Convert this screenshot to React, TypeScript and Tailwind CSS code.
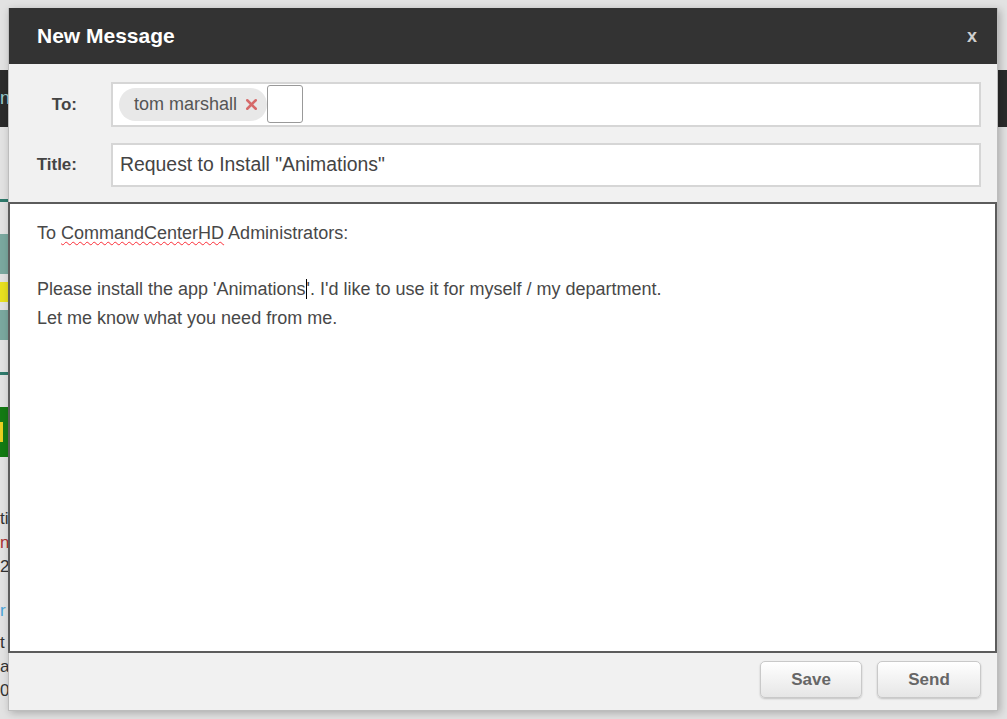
import { X } from "lucide-react";

function BackPage() {
  // the page sitting behind the dialog, only its edges show
  return (
    <div className="flex h-full w-full flex-col">
      <div className="h-[70px]" />
      <div className="flex h-[57px] items-center bg-[#2b2b2b] text-[18px] text-[#9cc]">n</div>
      <div className="h-[72px]" />
      <div className="h-[3px] w-[8px] bg-[#2f7a6c]" />
      <div className="flex h-[170px] flex-col justify-center gap-2">
        <div className="h-[40px] w-[8px] bg-[#7aa89f]" />
        <div className="h-[20px] w-[8px] bg-[#e8e020]" />
        <div className="h-[30px] w-[8px] bg-[#7aa89f]" />
      </div>
      <div className="h-[3px] w-[8px] bg-[#2f7a6c]" />
      <div className="h-[32px]" />
      <div className="flex h-[50px] w-[8px] items-center bg-[#137a13]">
        <div className="h-[20px] w-[3px] bg-[#e8d020]" />
      </div>
      <div className="flex flex-col pt-[50px] text-[17px] leading-[24px] text-[#333]">
        <span>ti</span>
        <span className="text-[#a33]">n</span>
        <span>2c</span>
        <span className="pt-[20px] text-[#4aa3d8]">r</span>
        <span className="pt-[8px]">t</span>
        <span>a</span>
        <span>0(</span>
      </div>
    </div>
  );
}

function ToField() {
  return (
    <div className="flex h-[45px] w-[870px] items-end border-2 border-[#d6d6d6] bg-white pb-[4px] pl-[6px]">
      <div className="flex h-[33px] items-center gap-[6px] rounded-full bg-[#e8e8e8] pl-[15px] pr-[7px] text-[18px] text-[#555]">
        <span>tom marshall</span>
        <X size={17} strokeWidth={3.5} className="text-[#d66a6a]" />
      </div>
      <div className="-mb-[2px] h-[38px] w-[36px] rounded-[3px] border border-[#999] bg-white" />
    </div>
  );
}

export default function App() {
  return (
    <div className="relative h-[719px] w-full overflow-hidden bg-[#e2e2e2] font-['Liberation_Sans',Arial,sans-serif]">
      <BackPage />
      <div className="absolute left-[8px] top-[8px] flex h-[703px] w-[990px] flex-col border-x border-b border-[#bdbdbd] bg-[#f1f1f1] shadow-[2px_2px_8px_rgba(0,0,0,0.25)]">
        <div className="flex h-[56px] shrink-0 items-center justify-between bg-[#333333] pl-[28px] pr-[20px]">
          <span className="text-[21px] font-bold text-white">New Message</span>
          <span className="text-[18px] font-bold text-[#cfcfcf]">x</span>
        </div>

        <div className="flex flex-col gap-[16px] pb-[15px] pr-[16px] pt-[18px]">
          <div className="flex items-center">
            <label className="w-[68px] text-right text-[17px] font-bold text-[#444]">To:</label>
            <div className="ml-[34px]">
              <ToField />
            </div>
          </div>
          <div className="flex items-center">
            <label className="w-[68px] text-right text-[17px] font-bold text-[#444]">Title:</label>
            <div className="ml-[34px] flex h-[44px] w-[870px] items-center border-2 border-[#d6d6d6] bg-white pl-[7px] text-[19.4px] text-[#444]">
              Request to Install "Animations"
            </div>
          </div>
        </div>

        <div className="-ml-px flex-1 border-2 border-[#5c5c5c] bg-white pl-[27px] pt-[15px] text-[18px] leading-[29px] text-[#484848]">
          <p>
            To{" "}
            <span className="underline decoration-red-500 decoration-wavy decoration-1 underline-offset-2">
              CommandCenterHD
            </span>{" "}
            Administrators:
          </p>
          <div className="h-[27px]" />
          <p>
            Please install the app 'Animations<span className="border-l border-black" />'. I'd like to use it for myself / my department.
          </p>
          <p>Let me know what you need from me.</p>
        </div>

        <div className="flex h-[57px] shrink-0 items-start justify-end gap-[15px] pr-[16px] pt-[8px]">
          <button className="h-[37px] w-[102px] rounded-[5px] border border-[#c9c9c9] bg-gradient-to-b from-white to-[#e6e6e6] text-[17px] font-bold text-[#666] shadow-[0_1px_2px_rgba(0,0,0,0.2)]">
            Save
          </button>
          <button className="h-[37px] w-[104px] rounded-[5px] border border-[#c9c9c9] bg-gradient-to-b from-white to-[#e6e6e6] text-[17px] font-bold text-[#666] shadow-[0_1px_2px_rgba(0,0,0,0.2)]">
            Send
          </button>
        </div>
      </div>
    </div>
  );
}
